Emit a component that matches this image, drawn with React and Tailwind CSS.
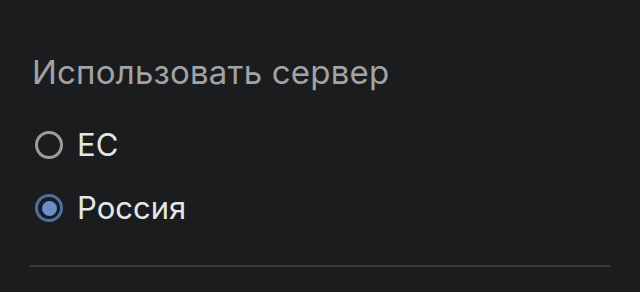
export default function App() {
  const options = [
    { label: "ЕС", checked: false },
    { label: "Россия", checked: true },
  ];
  return (
    <div
      className="w-[640px] h-[292px] bg-[#1b1c1e] px-[32px] pt-[50px]"
      style={{ fontFamily: "Inter, 'Noto Sans', sans-serif" }}
    >
      <div className="text-[33px] leading-[44px] text-[#a2a3a5] tracking-[0.2px]">
        Использовать сервер
      </div>
      <div className="mt-[31px] flex flex-col gap-[23px]">
        {options.map((o) => (
          <div key={o.label} className="flex items-center h-[40px]">
            {o.checked ? (
              <span className="ml-[3px] w-[28px] h-[28px] rounded-full border-[3px] border-[#4e6f9f] flex items-center justify-center">
                <span className="w-[15px] h-[15px] rounded-full bg-[#6a8fc8]" />
              </span>
            ) : (
              <span className="ml-[3px] w-[28px] h-[28px] rounded-full border-[3px] border-[#9b9c9e]" />
            )}
            <span className="ml-[14px] text-[31px] text-[#e6e6e8]">{o.label}</span>
          </div>
        ))}
      </div>
      <div className="mt-[37px] h-[2px] -mx-[2px] bg-[#3a3b3e]" />
    </div>
  );
}
